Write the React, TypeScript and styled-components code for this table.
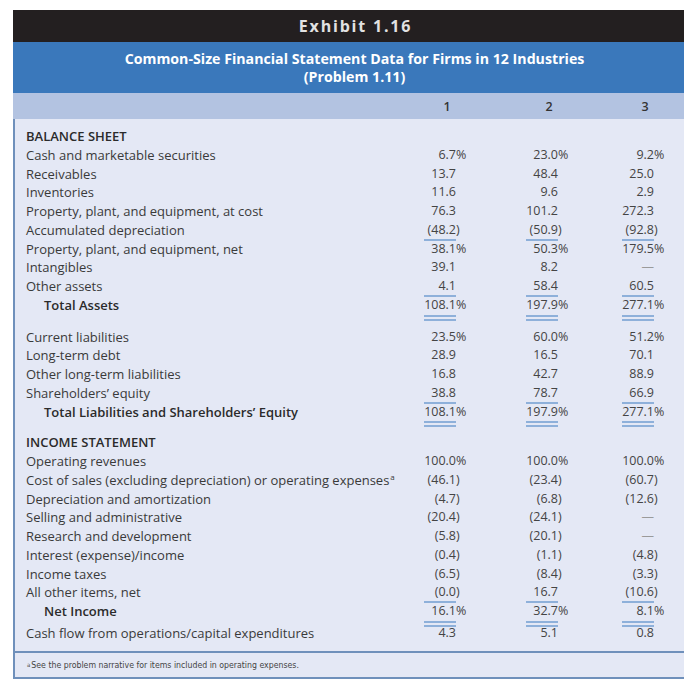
import React from 'react';
import styled, { createGlobalStyle } from 'styled-components';

const Global = createGlobalStyle`
  html, body { margin: 0; padding: 0; background: #ffffff; }
  body { font-family: "Open Sans", Lato, sans-serif; }
`;

const COLS = 'minmax(0, 1fr) 100px 102px 96px';
const BODY_BG = '#e4e8f5';
const RULE = '#8eb0da';
const FRAME_LINE = '#6f90bb';

const Frame = styled.div`
  width: 671px;
  margin: 10px 0 0 13px;
`;

const TitleBar = styled.div`
  height: 32px;
  box-sizing: border-box;
  padding-left: 14px;
  background: #231f20;
  color: #e2e2e2;
  display: flex;
  align-items: center;
  justify-content: center;
  font-family: "Open Sans", sans-serif;
  font-weight: 700;
  font-size: 16px;
  letter-spacing: 1.8px;
`;

const SubtitleBar = styled.div`
  height: 51px;
  box-sizing: border-box;
  padding-left: 12px;
  background: #3a78bb;
  color: #ffffff;
  display: flex;
  flex-direction: column;
  align-items: center;
  justify-content: center;
  font-family: "Open Sans", sans-serif;
  font-weight: 700;
  font-size: 14.2px;
  line-height: 18px;
`;

const HeaderBand = styled.div`
  height: 26px;
  background: #b3c3e1;
  display: grid;
  grid-template-columns: ${COLS};
  align-items: center;
  padding: 0 16px 0 13px;
  font-family: "Open Sans", sans-serif;
  font-weight: 600;
  font-size: 12.5px;
  color: #333333;
`;

const HeaderCell = styled.div`
  display: flex;
  justify-content: flex-end;
`;

const HeadNum = styled.span`
  width: 46px;
  text-align: center;
`;

const Body = styled.div`
  background: ${BODY_BG};
  border-left: 2px solid ${FRAME_LINE};
  padding: 8px 16px 8px 11px;
  font-family: "Open Sans", sans-serif;
  font-size: 13px;
  color: #3a3a3a;
`;

const Row = styled.div<{ $gapBefore?: number }>`
  display: grid;
  grid-template-columns: ${COLS};
  height: 18.75px;
  line-height: 18.75px;
  margin-top: ${(p) => p.$gapBefore ?? 0}px;
`;

const Label = styled.div<{ $indent?: boolean; $strong?: boolean }>`
  white-space: nowrap;
  padding-left: ${(p) => (p.$indent ? 18 : 0)}px;
  font-weight: ${(p) => (p.$strong ? 600 : 400)};
  color: ${(p) => (p.$strong ? '#2b2b2b' : '#3a3a3a')};
`;

const Sup = styled.sup`
  font-size: 8px;
  line-height: 0;
  vertical-align: 5px;
  margin-left: 1px;
`;

const ValueCell = styled.div`
  display: flex;
  justify-content: flex-end;
  padding-right: 14px;
`;

type Rule = 'single' | 'double' | undefined;

const Figure = styled.div<{ $rule?: Rule; $dash?: boolean }>`
  position: relative;
  width: 32px;
  text-align: right;
  white-space: nowrap;
  font-size: 12.5px;
  color: ${(p) => (p.$dash ? '#9a9a9a' : '#444444')};
  &::after {
    content: '';
    display: ${(p) => (p.$rule ? 'block' : 'none')};
    position: absolute;
    left: 0;
    right: 0;
    bottom: ${(p) => (p.$rule === 'double' ? -6 : -1)}px;
    height: ${(p) => (p.$rule === 'double' ? 2 : 0)}px;
    border-top: 2px solid ${RULE};
    border-bottom: ${(p) => (p.$rule === 'double' ? `2px solid ${RULE}` : 'none')};
  }
`;

const Hang = styled.span`
  display: inline-block;
  width: 0;
  text-align: left;
`;

const Footnote = styled.div`
  height: 24px;
  background: ${BODY_BG};
  border-left: 2px solid ${FRAME_LINE};
  border-top: 2px solid ${FRAME_LINE};
  border-bottom: 2px solid ${FRAME_LINE};
  display: flex;
  align-items: center;
  padding-left: 12px;
  font-family: "Liberation Sans Narrow", "DejaVu Sans Condensed", Lato, sans-serif;
  font-size: 8.7px;
  color: #444444;
`;

const FootSup = styled.sup`
  font-size: 6px;
  line-height: 0;
  vertical-align: 3px;
  margin-right: 1px;
`;

type RowDef = {
  label: string;
  values?: [string, string, string];
  rule?: Rule;
  indent?: boolean;
  strong?: boolean;
  gap?: number;
  note?: boolean;
};

const rows: RowDef[] = [
  { label: 'BALANCE SHEET', strong: true },
  { label: 'Cash and marketable securities', values: ['6.7%', '23.0%', '9.2%'] },
  { label: 'Receivables', values: ['13.7', '48.4', '25.0'] },
  { label: 'Inventories', values: ['11.6', '9.6', '2.9'] },
  { label: 'Property, plant, and equipment, at cost', values: ['76.3', '101.2', '272.3'] },
  { label: 'Accumulated depreciation', values: ['(48.2)', '(50.9)', '(92.8)'], rule: 'single' },
  { label: 'Property, plant, and equipment, net', values: ['38.1%', '50.3%', '179.5%'] },
  { label: 'Intangibles', values: ['39.1', '8.2', '—'] },
  { label: 'Other assets', values: ['4.1', '58.4', '60.5'], rule: 'single' },
  { label: 'Total Assets', values: ['108.1%', '197.9%', '277.1%'], rule: 'double', indent: true, strong: true },
  { label: 'Current liabilities', values: ['23.5%', '60.0%', '51.2%'], gap: 13 },
  { label: 'Long-term debt', values: ['28.9', '16.5', '70.1'] },
  { label: 'Other long-term liabilities', values: ['16.8', '42.7', '88.9'] },
  { label: 'Shareholders’ equity', values: ['38.8', '78.7', '66.9'], rule: 'single' },
  {
    label: 'Total Liabilities and Shareholders’ Equity',
    values: ['108.1%', '197.9%', '277.1%'],
    rule: 'double',
    indent: true,
    strong: true,
  },
  { label: 'INCOME STATEMENT', strong: true, gap: 12 },
  { label: 'Operating revenues', values: ['100.0%', '100.0%', '100.0%'] },
  {
    label: 'Cost of sales (excluding depreciation) or operating expenses',
    values: ['(46.1)', '(23.4)', '(60.7)'],
    note: true,
  },
  { label: 'Depreciation and amortization', values: ['(4.7)', '(6.8)', '(12.6)'] },
  { label: 'Selling and administrative', values: ['(20.4)', '(24.1)', '—'] },
  { label: 'Research and development', values: ['(5.8)', '(20.1)', '—'] },
  { label: 'Interest (expense)/income', values: ['(0.4)', '(1.1)', '(4.8)'] },
  { label: 'Income taxes', values: ['(6.5)', '(8.4)', '(3.3)'] },
  { label: 'All other items, net', values: ['(0.0)', '16.7', '(10.6)'], rule: 'single' },
  { label: 'Net Income', values: ['16.1%', '32.7%', '8.1%'], rule: 'double', indent: true, strong: true },
  { label: 'Cash flow from operations/capital expenditures', values: ['4.3', '5.1', '0.8'], gap: 3 },
];

function Value({ text, rule }: { text: string; rule?: Rule }) {
  const last = text.slice(-1);
  const hangs = last === '%' || last === ')';
  const main = hangs ? text.slice(0, -1) : text;
  return (
    <ValueCell>
      <Figure $rule={rule} $dash={text === '—'}>
        {main}
        {hangs && <Hang>{last}</Hang>}
      </Figure>
    </ValueCell>
  );
}

export default function App() {
  return (
    <>
      <Global />
      <Frame>
        <TitleBar>Exhibit 1.16</TitleBar>
        <SubtitleBar>
          <span>Common-Size Financial Statement Data for Firms in 12 Industries</span>
          <span>(Problem 1.11)</span>
        </SubtitleBar>
        <HeaderBand>
          <span />
          {['1', '2', '3'].map((n) => (
            <HeaderCell key={n}>
              <HeadNum>{n}</HeadNum>
            </HeaderCell>
          ))}
        </HeaderBand>
        <Body>
          {rows.map((r) => (
            <Row key={r.label} $gapBefore={r.gap}>
              <Label $indent={r.indent} $strong={r.strong}>
                {r.label}
                {r.note && <Sup>a</Sup>}
              </Label>
              {r.values ? (
                r.values.map((v, i) => <Value key={i} text={v} rule={r.rule} />)
              ) : (
                <>
                  <span />
                  <span />
                  <span />
                </>
              )}
            </Row>
          ))}
        </Body>
        <Footnote>
          <FootSup>a</FootSup>
          See the problem narrative for items included in operating expenses.
        </Footnote>
      </Frame>
    </>
  );
}
